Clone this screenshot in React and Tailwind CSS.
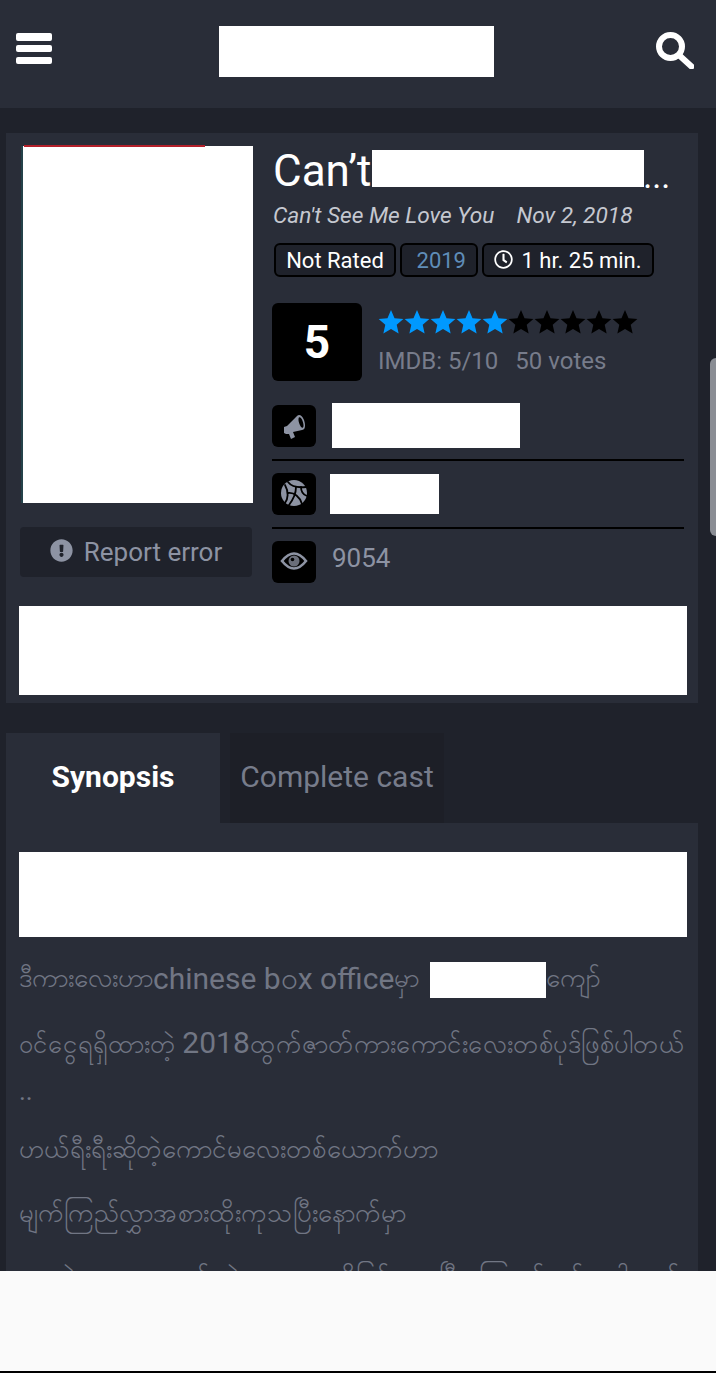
import React from 'react';
import { FaExclamationCircle, FaRegClock } from 'react-icons/fa';

const STAR_POINTS = '13,0 16.53,8.15 25.36,8.98 18.71,14.85 20.64,23.52 13,19 5.36,23.52 7.29,14.85 0.64,8.98 9.47,8.15';

function Stars() {
  return (
    <div className="flex">
      {[0, 1, 2, 3, 4, 5, 6, 7, 8, 9].map((i) => (
        <svg key={i} viewBox="0 0 26 24" className={`w-[26px] h-[24px] shrink-0 ${i < 5 ? 'text-[#0099ff]' : 'text-black'}`}>
          <polygon points={STAR_POINTS} fill="currentColor" />
        </svg>
      ))}
    </div>
  );
}

function InfoIcon({ children }) {
  return (
    <div className="w-11 h-[42px] shrink-0 bg-black rounded-md flex items-center justify-center text-[#8d93a3]">
      {children}
    </div>
  );
}

function Megaphone() {
  return (
    <svg viewBox="8 8 26 28" className="w-[26px] h-[28px]">
      <path d="M11 23 L14 22 L24 12 C26 10 29 11 31 16 C33 22 32 26 29 26 L20 28 L22 33 L18 35 L16 30 L13 30 L11 29 Z" fill="currentColor" />
      <ellipse cx="28" cy="18.5" rx="2" ry="5.5" transform="rotate(-18 28 18.5)" fill="#000" />
    </svg>
  );
}

function Globe() {
  return (
    <svg viewBox="8 8 30 30" className="w-[30px] h-[30px]">
      <circle cx="23" cy="22" r="13" fill="currentColor" />
      <g fill="none" stroke="#000" strokeWidth="1.8" strokeLinecap="round">
        <path d="M17 11 C20 15 26 17 35 16" />
        <path d="M14 14 C18 21 17 28 14 32" />
        <path d="M17 22 C23 21 29 26 31 33" />
        <path d="M25 16 C25 23 21 30 18 34" />
        <path d="M30 16 C30 21 33 24 36 25" />
      </g>
    </svg>
  );
}

function Eye() {
  return (
    <svg viewBox="8 8 30 30" className="w-[30px] h-[30px]">
      <path d="M11 22 Q23 7 35 22 Q23 37 11 22 Z" fill="none" stroke="currentColor" strokeWidth="2.6" />
      <circle cx="23" cy="22" r="5.5" fill="currentColor" opacity="0.75" />
      <circle cx="21.5" cy="20.5" r="1.8" fill="#000" />
    </svg>
  );
}

export default function App() {
  return (
    <div className="relative w-[716px] h-[1373px] overflow-hidden bg-black font-['Roboto',sans-serif]">
      <div className="h-[1271px] overflow-hidden bg-[#1f222b]">
        {/* top bar */}
        <header className="h-[108px] bg-[#292d38] flex items-start justify-between pl-4 pr-[22px]">
          <svg viewBox="0 0 36 31" className="w-9 h-[31px] mt-[33px] text-white">
            <rect x="0" y="0" width="36" height="8" rx="2" fill="currentColor" />
            <rect x="0" y="12" width="36" height="7" rx="2" fill="currentColor" />
            <rect x="0" y="24" width="36" height="7" rx="2" fill="currentColor" />
          </svg>
          <div className="w-[275px] h-[51px] mt-[26px] ml-[5px] bg-white" />
          <svg viewBox="0 0 38 37" className="w-[38px] h-[37px] mt-[32px] text-white">
            <circle cx="14.5" cy="14.5" r="11.5" fill="none" stroke="currentColor" strokeWidth="6" />
            <path d="M24 24 L35.5 34.5" fill="none" stroke="currentColor" strokeWidth="6" strokeLinecap="round" />
          </svg>
        </header>

        {/* movie panel */}
        <section className="mt-[25px] ml-[6px] w-[692px] h-[570px] bg-[#292d38] pt-[13px] px-[13px]">
          <div className="flex">
            <div className="w-[233px] shrink-0 ml-[1px]">
              <div className="relative w-[232px] h-[357px] ml-[1px] bg-white border-l-2 border-[#24424a]">
                <div className="absolute -top-[1px] left-[1px] w-[181px] h-[2px] bg-[#b3202a]" />
              </div>
              <button className="w-[232px] h-[50px] mt-6 bg-[#1f222b] rounded-sm flex items-center justify-center gap-[11px] text-[#8d93a3] text-[26px]">
                <FaExclamationCircle className="w-[23px] h-[23px] -mt-[3px]" />
                Report error
              </button>
            </div>

            <div className="ml-[19px] w-[412px]">
              <div className="flex items-center h-[50px] pl-[1px] text-[44px] leading-none text-white">
                <span>Can’t</span>
                <div className="w-[272px] h-[37px] ml-[1px] -mt-[6px] bg-white" />
                <span className="self-end text-[34px] mb-[3px] -ml-[1px]">...</span>
              </div>
              <div className="mt-[5px] pl-[1px] flex gap-[22px] italic text-[22.7px] leading-[30px] text-[#c5c8d0]">
                <span>Can't See Me Love You</span>
                <span>Nov 2, 2018</span>
              </div>
              <div className="mt-[12px] ml-[2px] flex gap-1 text-[22px] text-white">
                <span className="h-[34px] w-[122px] flex items-center justify-center bg-[#1f222b] border-2 border-black rounded-md">Not Rated</span>
                <span className="h-[34px] w-[78px] flex items-center justify-end pr-[10px] bg-[#1f222b] border-2 border-black rounded-md text-[#5f8db8]">2019</span>
                <span className="h-[34px] w-[172px] flex items-center justify-center gap-2 bg-[#1f222b] border-2 border-black rounded-md">
                  <FaRegClock className="w-[19px] h-[19px] -mt-[2px]" />
                  1 hr. 25 min.
                </span>
              </div>

              <div className="mt-[26px] flex">
                <div className="w-[90px] h-[78px] bg-black rounded-md flex items-center justify-center text-white font-bold text-[46px]">5</div>
                <div className="ml-4 mt-[7px]">
                  <Stars />
                  <div className="mt-[11px] flex gap-[17px] text-[24px] leading-[32px] text-[#777c8b]">
                    <span>IMDB: 5/10</span>
                    <span>50 votes</span>
                  </div>
                </div>
              </div>

              <div className="mt-[22px] h-[58px] flex border-b-2 border-black">
                <div className="pt-[2px]"><InfoIcon><Megaphone /></InfoIcon></div>
                <div className="w-[188px] h-[45px] ml-4 bg-white" />
              </div>
              <div className="h-[68px] flex border-b-2 border-black pt-[12px]">
                <InfoIcon><Globe /></InfoIcon>
                <div className="w-[109px] h-10 ml-[14px] mt-[1px] bg-white" />
              </div>
              <div className="flex pt-[12px]">
                <InfoIcon><Eye /></InfoIcon>
                <span className="ml-4 mt-[1px] text-[26px] leading-[32px] text-[#8d93a3]">9054</span>
              </div>
            </div>
          </div>
          <div className="w-[668px] h-[89px] mt-[23px] bg-white" />
        </section>

        {/* tabs */}
        <div className="mt-[30px] ml-[6px] w-[692px] flex h-[90px] bg-[#1f222b]">
          <div className="w-[214px] pb-1 bg-[#292d38] flex items-center justify-center text-white font-bold text-[30px]">Synopsis</div>
          <div className="w-[214px] ml-[10px] pb-1 flex items-center justify-center bg-[#1d1f27] text-[#777c8b] text-[30px]">Complete cast</div>
        </div>

        {/* synopsis */}
        <section className="ml-[6px] w-[692px] bg-[#292d38] pt-[29px] px-[13px] h-[460px] text-[#717684] text-[30px]">
          <div className="w-[668px] h-[85px] bg-white" />
          <div className="mt-[25px] h-[36px] pb-1 flex items-center whitespace-nowrap">
            <span className="text-[26px]">ဒီကားလေးဟာ</span>
            <span>chinese b၀x office</span>
            <span className="text-[26px]">မှာ</span>
            <div className="w-[116px] h-9 ml-[11px] self-start bg-white shrink-0" />
            <span className="text-[26px]">ကျော်</span>
          </div>
          <p className="mt-[27px] leading-[36px] whitespace-nowrap">
            <span className="text-[25.5px]">ဝင်ငွေရရှိထားတဲ့ </span>2018<span className="text-[25.5px]">ထွက်ဇာတ်ကားကောင်းလေးတစ်ပုဒ်ဖြစ်ပါတယ်</span>
          </p>
          <p className="mt-[11px] leading-[36px] text-[26px]">..</p>
          <p className="mt-[22px] leading-[36px] whitespace-nowrap text-[25.8px]">ဟယ်ရီးရီးဆိုတဲ့ကောင်မလေးတစ်ယောက်ဟာ</p>
          <p className="mt-[28px] leading-[36px] whitespace-nowrap text-[25.8px]">မျက်ကြည်လွှာအစားထိုးကုသပြီးနောက်မှာ</p>
          <p className="mt-[28px] leading-[36px] whitespace-nowrap text-[25.8px]">သူမရဲ့ဘဝမှာထူးဆန်းတဲ့အရာတွေကိုမြင်လာရပြီးကြောက်လန့်နေပါတယ်</p>
        </section>
      </div>

      {/* bottom blank strip */}
      <div className="h-[100px] bg-[#fafafa]" />

      {/* scrollbar thumb */}
      <div className="absolute top-[358px] right-0 w-[6px] h-[178px] rounded-l-md bg-[#8a8d94]" />
    </div>
  );
}
